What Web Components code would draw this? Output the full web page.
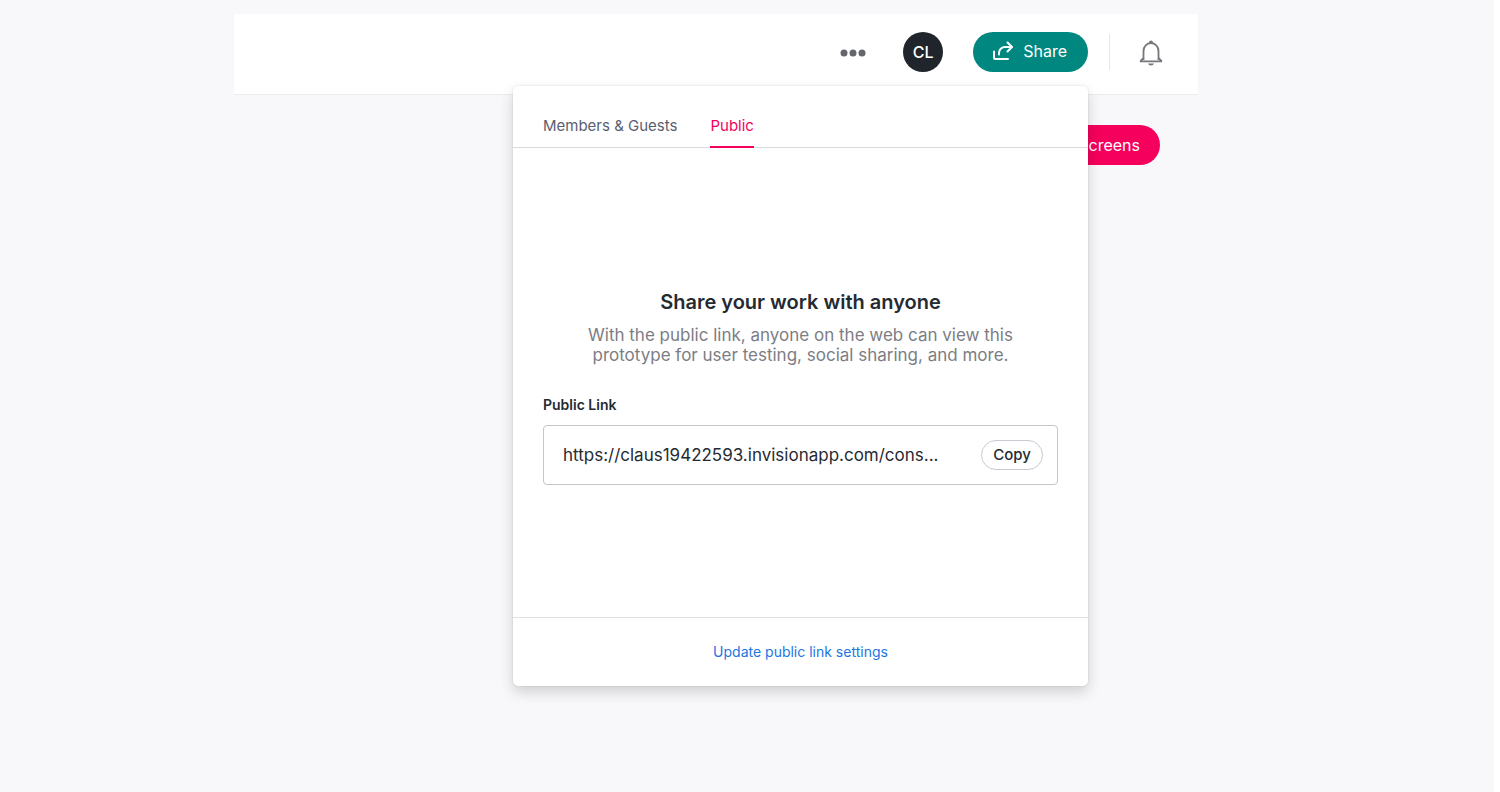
<!DOCTYPE html>
<html lang="en">
<head>
<meta charset="utf-8">
<title>Share prototype</title>
<style>
  body { margin: 0; background: #fff; font-family: Inter, "Open Sans", sans-serif; font-size: 16px; line-height: 20px; color: #252a31; }
</style>
</head>
<body>
<prototype-page>
  <app-header slot="header">
    <more-menu></more-menu>
    <user-avatar>CL</user-avatar>
    <share-control>
      <share-popover>
        <tab-bar slot="tabs">
          <tab-item>Members &amp; Guests</tab-item>
          <tab-item active>Public</tab-item>
        </tab-bar>
        <share-message>
          <span slot="title">Share your work with anyone</span>
          With the public link, anyone on the web can view this prototype for user testing, social sharing, and more.
        </share-message>
        <link-field label="Public Link" value="https://claus19422593.invisionapp.com/cons..."></link-field>
        <settings-link slot="footer">Update public link settings</settings-link>
      </share-popover>
    </share-control>
    <notification-bell></notification-bell>
  </app-header>
  <screens-button>Screens</screens-button>
</prototype-page>

<script>
const define = (name, markup, setup) => {
  const template = document.createElement('template');
  template.innerHTML = `<style>*{box-sizing:border-box} button,input{font:inherit;margin:0} button{cursor:pointer}</style>${markup}`;
  customElements.define(name, class extends HTMLElement {
    constructor() {
      super();
      this.attachShadow({ mode: 'open' }).append(template.content.cloneNode(true));
    }
    connectedCallback() { if (setup) setup(this, this.shadowRoot); }
  });
};

define('prototype-page', `
<style>
  :host { display: block; padding-right: 6px; }
  main { min-height: 100vh; padding: 14px 296px 0 234px; background: #f8f8fb; box-sizing: border-box; }
  .actions { display: flex; justify-content: flex-end; padding: 30px 38px 0 0; }
</style>
<main>
  <slot name="header"></slot>
  <div class="actions"><slot></slot></div>
</main>`);

define('app-header', `
<style>
  :host { display: block; }
  header { display: flex; align-items: center; justify-content: flex-end; height: 81px; padding: 0 35px 5px 20px; background: #fff; border-bottom: 1px solid #ececef; }
</style>
<header><slot></slot></header>`);

define('more-menu', `
<style>
  :host { display: block; margin-right: 37px; }
  button { display: flex; padding: 8px 0; border: 0; background: none; }
</style>
<button type="button" aria-label="More options">
  <svg width="26" height="10" viewBox="0 0 26 10" fill="#65666c"><circle cx="4" cy="6" r="3.5"/><circle cx="13" cy="6" r="3.5"/><circle cx="22" cy="6" r="3.5"/></svg>
</button>`);

define('user-avatar', `
<style>
  :host { display: grid; place-items: center; width: 40px; height: 40px; margin-right: 30px; border-radius: 50%; background: #20252c; color: #fff; font-size: 16px; font-weight: 500; }
</style>
<slot></slot>`);

define('share-control', `
<style>
  :host { display: block; position: relative; margin-right: 21px; }
  button { display: flex; align-items: center; gap: 10px; height: 40px; padding: 0 21px 2px 20px; border: 0; border-radius: 20px; background: #008780; color: #fff; }
  .popover { position: absolute; top: calc(100% + 14px); right: 0; width: 575px; }
</style>
<button type="button" aria-expanded="true">
  <svg width="20" height="20" viewBox="0 0 20 20" fill="none" stroke="#fff" stroke-width="2" stroke-linejoin="round" stroke-linecap="round"><path d="M1 10.500v6q0 1.500 1.500 1.500H15"/><path d="M6 13.500V12a6 6 0 0 1 6-6h6.500"/><path d="M14.500 1.500L19 6l-4.500 4.500"/></svg>
  <span>Share</span>
</button>
<div class="popover"><slot></slot></div>`);

define('notification-bell', `
<style>
  :host { display: flex; align-items: center; height: 36px; padding-left: 29px; border-left: 1px solid #e6e6ea; }
  button { display: flex; padding: 2px 0 0; border: 0; background: none; }
</style>
<button type="button" aria-label="Notifications">
  <svg width="24" height="26" viewBox="0 0 24 26"><g fill="none" stroke="#76777d" stroke-width="1.800"><path d="M4.500 20V11a7.500 8 0 0 1 15 0v9"/><path d="M1.500 21.500c0-1.500 1.500-1.500 3-3.500M22.500 21.500c0-1.500-1.500-1.500-3-3.500M1 21.400h22"/></g><path d="M10 3.500V2.500a2 2 0 0 1 4 0v1zM9 23.500h6c-.5 1.300-1.500 2-3 2s-2.500-.7-3-2z" fill="#76777d"/></svg>
</button>`);

define('screens-button', `
<style>
  :host { display: block; }
  button { height: 40px; padding: 0 20px 0 24px; border: 0; border-radius: 20px; background: #f5005c; color: #fff; }
</style>
<button type="button"><slot></slot></button>`);

define('share-popover', `
<style>
  section { display: flex; flex-direction: column; min-height: 600px; background: #fff; border-radius: 5px; box-shadow: 0 0 2px rgba(0,0,0,.14), 0 6px 14px rgba(0,0,0,.16); }
  .body { flex: 1; display: flex; flex-direction: column; justify-content: center; gap: 30px; padding: 10px 30px 0; }
  footer { display: flex; justify-content: center; align-items: center; height: 69px; border-top: 1px solid #dfe0e3; }
</style>
<section>
  <slot name="tabs"></slot>
  <div class="body"><slot></slot></div>
  <footer><slot name="footer"></slot></footer>
</section>`);

define('tab-bar', `
<style>
  :host { display: block; }
  nav { display: flex; align-items: flex-end; gap: 33px; height: 62px; padding: 0 30px; border-bottom: 1px solid #d8dadd; }
</style>
<nav role="tablist"><slot></slot></nav>`);

define('tab-item', `
<style>
  :host { display: block; margin-bottom: -1px; }
  button { display: block; padding: 0 0 10px; border: 0; border-bottom: 2px solid transparent; background: none; color: #596070; font-size: 15px; }
  :host([active]) button { color: #f5005c; border-bottom-color: #f5005c; }
</style>
<button type="button" role="tab"><slot></slot></button>`,
(host, root) => root.querySelector('button').setAttribute('aria-selected', host.hasAttribute('active')));

define('share-message', `
<style>
  :host { display: block; text-align: center; }
  h2 { margin: 0 0 10px; font-size: 20px; line-height: 26px; font-weight: 600; }
  p { max-width: 440px; margin: 0 auto; color: #7c7d84; font-size: 17px; }
</style>
<h2><slot name="title"></slot></h2>
<p><slot></slot></p>`);

define('link-field', `
<style>
  :host { display: block; }
  label { display: block; margin-bottom: 10px; font-size: 14px; font-weight: 600; }
  .box { display: flex; align-items: center; gap: 30px; height: 60px; padding: 0 14px 0 19px; border: 1px solid #c5c6cb; border-radius: 4px; }
  input { flex: 1; min-width: 0; padding: 0; border: 0; outline: 0; background: none; color: #252a31; font-size: 17px; text-overflow: ellipsis; }
  button { height: 30px; padding: 0 11px; border: 1px solid #c9cad2; border-radius: 15px; background: #fff; color: #252a31; font-weight: 500; font-size: 15px; }
</style>
<label for="url"></label>
<div class="box"><input id="url" type="text" readonly><button type="button">Copy</button></div>`,
(host, root) => {
  root.querySelector('label').textContent = host.getAttribute('label');
  root.querySelector('input').value = host.getAttribute('value');
});

define('settings-link', `
<style>
  a { color: #2276e3; font-size: 14px; text-decoration: none; }
</style>
<a href="#settings"><slot></slot></a>`);
</script>
</body>
</html>
